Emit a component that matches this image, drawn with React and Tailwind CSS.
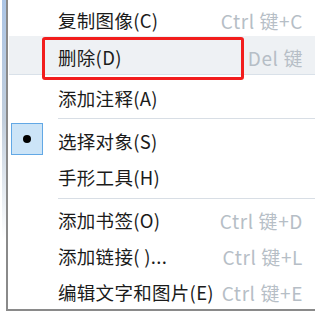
import React from 'react';

// Context menu rows; pt nudges the label so it sits where the screenshot has it
const rows = [
  { label: '复制图像(C)', shortcut: 'Ctrl 键+C', h: 'h-[36px]', pt: 'pt-[4px]' },
  { label: '删除(D)', shortcut: 'Del 键', h: 'h-[39px]', pt: 'pt-[5px]', hover: true },
  { label: '添加注释(A)', h: 'h-[41px]', pt: 'pt-[5px]' },
  { sep: true },
  { label: '选择对象(S)', h: 'h-[38px]', pt: 'pt-[4px]', checked: true },
  { label: '手形工具(H)', h: 'h-[38px]', pt: 'pt-0' },
  { sep: true },
  { label: '添加书签(O)', shortcut: 'Ctrl 键+D', h: 'h-[38px]', pt: 'pt-[3px]' },
  { label: '添加链接( )...', shortcut: 'Ctrl 键+L', h: 'h-[36px]', pt: 'pt-0' },
  { label: '编辑文字和图片(E)', shortcut: 'Ctrl 键+E', h: 'h-[36px]', pt: 'pt-[1px]' },
];

const font = { fontFamily: '"Noto Sans CJK SC", "Liberation Sans", sans-serif' };

function MenuRow({ row }) {
  if (row.sep) {
    return (
      <div className="h-[4px] flex items-center pl-[49px]">
        <div className="h-px w-full bg-[#d8dee5]" />
      </div>
    );
  }
  return (
    <div
      className={`relative flex items-center ${row.h} ${row.pt} ${
        row.hover ? 'bg-[#eef1f4] border-b border-[#d9e1e9]' : ''
      }`}
    >
      {row.checked && (
        <div className="absolute left-[2px] top-[3px] w-[32px] h-[32px] bg-[#cce4f7] border border-[#62a8e5] flex items-center justify-center">
          <div className="w-[8px] h-[8px] rounded-full bg-black" />
        </div>
      )}
      <span className="pl-[49px] text-[18.5px] tracking-[0.3px] leading-none text-[#1b1b1b] whitespace-nowrap">
        {row.label}
      </span>
      {row.shortcut && (
        <span className="ml-auto pr-[12px] text-[19px] tracking-[0.6px] leading-none text-[#b6bec6] whitespace-nowrap">
          {row.shortcut}
        </span>
      )}
    </div>
  );
}

export default function App() {
  return (
    <div className="relative w-[327px] h-[312px] bg-white overflow-hidden flex" style={font}>
      {/* edge of the window behind the menu */}
      <div className="ml-[2px] w-[4px] h-[240px] bg-gradient-to-b from-[#adc6e6] via-[#c2cfdd] to-white" />

      <div className="w-[309px] h-[311px] border-l-2 border-b-2 border-[#8a8a8a] pl-[1px]">
        {rows.map((row, i) => (
          <MenuRow key={i} row={row} />
        ))}
      </div>

      {/* red annotation box around 删除 */}
      <div className="absolute left-[42px] top-[37px] w-[202px] h-[43px] border-[3px] border-[#f21d1d] rounded-[3px]" />
    </div>
  );
}
